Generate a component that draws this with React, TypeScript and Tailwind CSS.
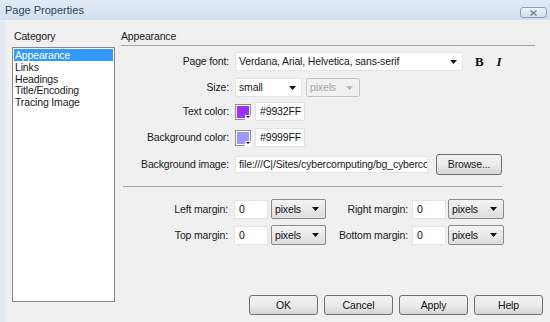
import React from 'react';

const font = { fontFamily: '"Liberation Sans", Arial, sans-serif' };

function Arrow({ disabled }: { disabled?: boolean }) {
  return (
    <svg width="7" height="4" viewBox="0 0 7 4" className="shrink-0">
      <path d="M0 0H7L3.5 4Z" fill={disabled ? '#b8b8b8' : '#111'} />
    </svg>
  );
}

function Swatch({ color }: { color: string }) {
  return (
    <div className="relative w-[16px] h-[16px] border border-[#8e8f8f] bg-white p-px">
      <div className="w-full h-full" style={{ backgroundColor: color }} />
      <div className="absolute right-[-1px] bottom-[-1px] w-[6px] h-[5px] bg-white flex items-center justify-center">
        <svg width="4" height="2" viewBox="0 0 4 2">
          <path d="M0 0H4L2 2Z" fill="#111" />
        </svg>
      </div>
    </div>
  );
}

function UnitSelect({ w }: { w: string }) {
  return (
    <div
      className={`${w} h-[20px] flex items-center justify-between pl-[3px] pr-[6px] rounded-[2px] border border-[#8a8a8a] bg-gradient-to-b from-[#f4f4f4] to-[#dddddd] text-[#111]`}
    >
      <span>pixels</span>
      <Arrow />
    </div>
  );
}

function TextBox({ w, value }: { w: string; value: string }) {
  return (
    <div className={`${w} h-[19px] flex items-center pl-[4px] bg-white border border-[#e2e3e4] text-[#111] overflow-hidden whitespace-nowrap`}>
      {value}
    </div>
  );
}

function Button({ label }: { label: string }) {
  return (
    <div className="w-[69px] h-[20px] flex items-center justify-center rounded-[3px] border border-[#707070] bg-gradient-to-b from-[#f2f2f2] via-[#ebebeb] to-[#d6d6d6] text-[#111]">
      {label}
    </div>
  );
}

export default function App() {
  return (
    <div
      className="w-[550px] h-[322px] bg-[#f0f0f0] text-[10.5px] leading-[13px] tracking-[-0.15px] text-[#1a1a1a] overflow-hidden"
      style={font}
    >
      {/* title bar */}
      <div className="h-[20px] flex items-start justify-between bg-gradient-to-b from-[#e1eaf5] to-[#d3dfed]">
        <span className="pl-[5px] pt-[3px] text-[11px] leading-[14px] tracking-[0px] text-[#2b4766]">Page Properties</span>
        <div className="mt-[7px] mr-[3px] w-[27px] h-[11px] rounded-[3px] border border-[#8e9db3] bg-gradient-to-b from-[#eef3f9] to-[#d2dceb] flex items-center justify-center">
          <svg width="7" height="6" viewBox="0 0 7 6">
            <path d="M0.5 0.5L6.5 5.5M6.5 0.5L0.5 5.5" stroke="#6d7d96" strokeWidth="1.3" fill="none" />
          </svg>
        </div>
      </div>

      {/* body */}
      <div className="h-[302px] flex border-l-[6px] border-[#e4ebf3]">
        {/* category column */}
        <div className="pl-[6px] pt-[10px] flex flex-col">
          <div className="h-[13px] mb-[4px] pl-[2px]">Category</div>
          <div className="w-[103px] h-[255px] bg-white border border-[#828790] p-px">
            <div className="h-[12px] bg-[#3399ff] text-white pl-[1px] leading-[12px]">Appearance</div>
            {['Links', 'Headings', 'Title/Encoding', 'Tracing Image'].map((c) => (
              <div key={c} className="h-[11.5px] pl-[1px] leading-[12px]">{c}</div>
            ))}
          </div>
        </div>

        {/* appearance panel */}
        <div className="ml-[6px] w-[422px] pt-[10px] flex flex-col">
          <div className="h-[13px]">Appearance</div>
          <div className="mt-[2px] w-[414px] h-px bg-[#a7a7a7]" />

          {/* page font */}
          <div className="mt-[6px] h-[19px] flex items-center">
            <div className="w-[108px] text-right">Page font:</div>
            <div className="ml-[6px] w-[228px] h-[19px] flex items-center justify-between pl-[3px] pr-[5px] bg-white border border-[#e2e3e4]">
              <span>Verdana, Arial, Helvetica, sans-serif</span>
              <Arrow />
            </div>
            <span className="ml-[12px] text-[13px] font-bold text-[#111]" style={{ fontFamily: '"Liberation Serif", serif' }}>B</span>
            <span className="ml-[13px] text-[13px] font-bold italic text-[#111]" style={{ fontFamily: '"Liberation Serif", serif' }}>I</span>
          </div>

          {/* size */}
          <div className="mt-[7px] h-[19px] flex items-center">
            <div className="w-[108px] text-right">Size:</div>
            <div className="ml-[6px] w-[67px] h-[19px] flex items-center justify-between pl-[3px] pr-[5px] bg-white border border-[#e2e3e4]">
              <span>small</span>
              <Arrow />
            </div>
            <div className="ml-[4px] w-[54px] h-[19px] flex items-center justify-between pl-[3px] pr-[6px] rounded-[2px] border border-[#c5c5c5] text-[#a6a6a6]">
              <span>pixels</span>
              <Arrow disabled />
            </div>
          </div>

          {/* text color */}
          <div className="mt-[5px] h-[19px] flex items-center">
            <div className="w-[108px] text-right">Text color:</div>
            <div className="ml-[6px]">
              <Swatch color="#9932FF" />
            </div>
            <div className="ml-[4px]">
              <TextBox w="w-[50px]" value="#9932FF" />
            </div>
          </div>

          {/* background color */}
          <div className="mt-[7px] h-[19px] flex items-center">
            <div className="w-[108px] text-right">Background color:</div>
            <div className="ml-[6px]">
              <Swatch color="#9999FF" />
            </div>
            <div className="ml-[4px]">
              <TextBox w="w-[50px]" value="#9999FF" />
            </div>
          </div>

          {/* background image */}
          <div className="mt-[7px] h-[21px] flex items-center">
            <div className="w-[108px] text-right">Background image:</div>
            <div className="ml-[6px]">
              <div className="w-[193px] h-[17px] flex items-center pl-[3px] bg-white border border-[#e2e3e4] overflow-hidden whitespace-nowrap">
                file:///C|/Sites/cybercomputing/bg_cyberco
              </div>
            </div>
            <div className="ml-[8px] w-[66px] h-[21px] flex items-center justify-center rounded-[3px] border border-[#707070] bg-gradient-to-b from-[#f2f2f2] via-[#ebebeb] to-[#d6d6d6]">
              Browse...
            </div>
          </div>

          <div className="mt-[11px] ml-[2px] w-[379px] h-px bg-[#a7a7a7]" />

          {/* margins */}
          {[
            ['Left margin:', 'Right margin:'],
            ['Top margin:', 'Bottom margin:'],
          ].map(([a, b], i) => (
            <div key={a} className={`${i === 0 ? 'mt-[12px]' : 'mt-[6px]'} h-[20px] flex items-center`}>
              <div className="w-[107px] text-right">{a}</div>
              <div className="ml-[6px]">
                <TextBox w="w-[34px]" value="0" />
              </div>
              <div className="ml-[3px]">
                <UnitSelect w="w-[55px]" />
              </div>
              <div className="w-[82px] text-right">{b}</div>
              <div className="ml-[4px]">
                <TextBox w="w-[34px]" value="0" />
              </div>
              <div className="ml-[2px]">
                <UnitSelect w="w-[56px]" />
              </div>
            </div>
          ))}

          {/* buttons */}
          <div className="mt-[50px] flex justify-end gap-[6px]">
            <Button label="OK" />
            <Button label="Cancel" />
            <Button label="Apply" />
            <Button label="Help" />
          </div>
        </div>
      </div>
    </div>
  );
}
